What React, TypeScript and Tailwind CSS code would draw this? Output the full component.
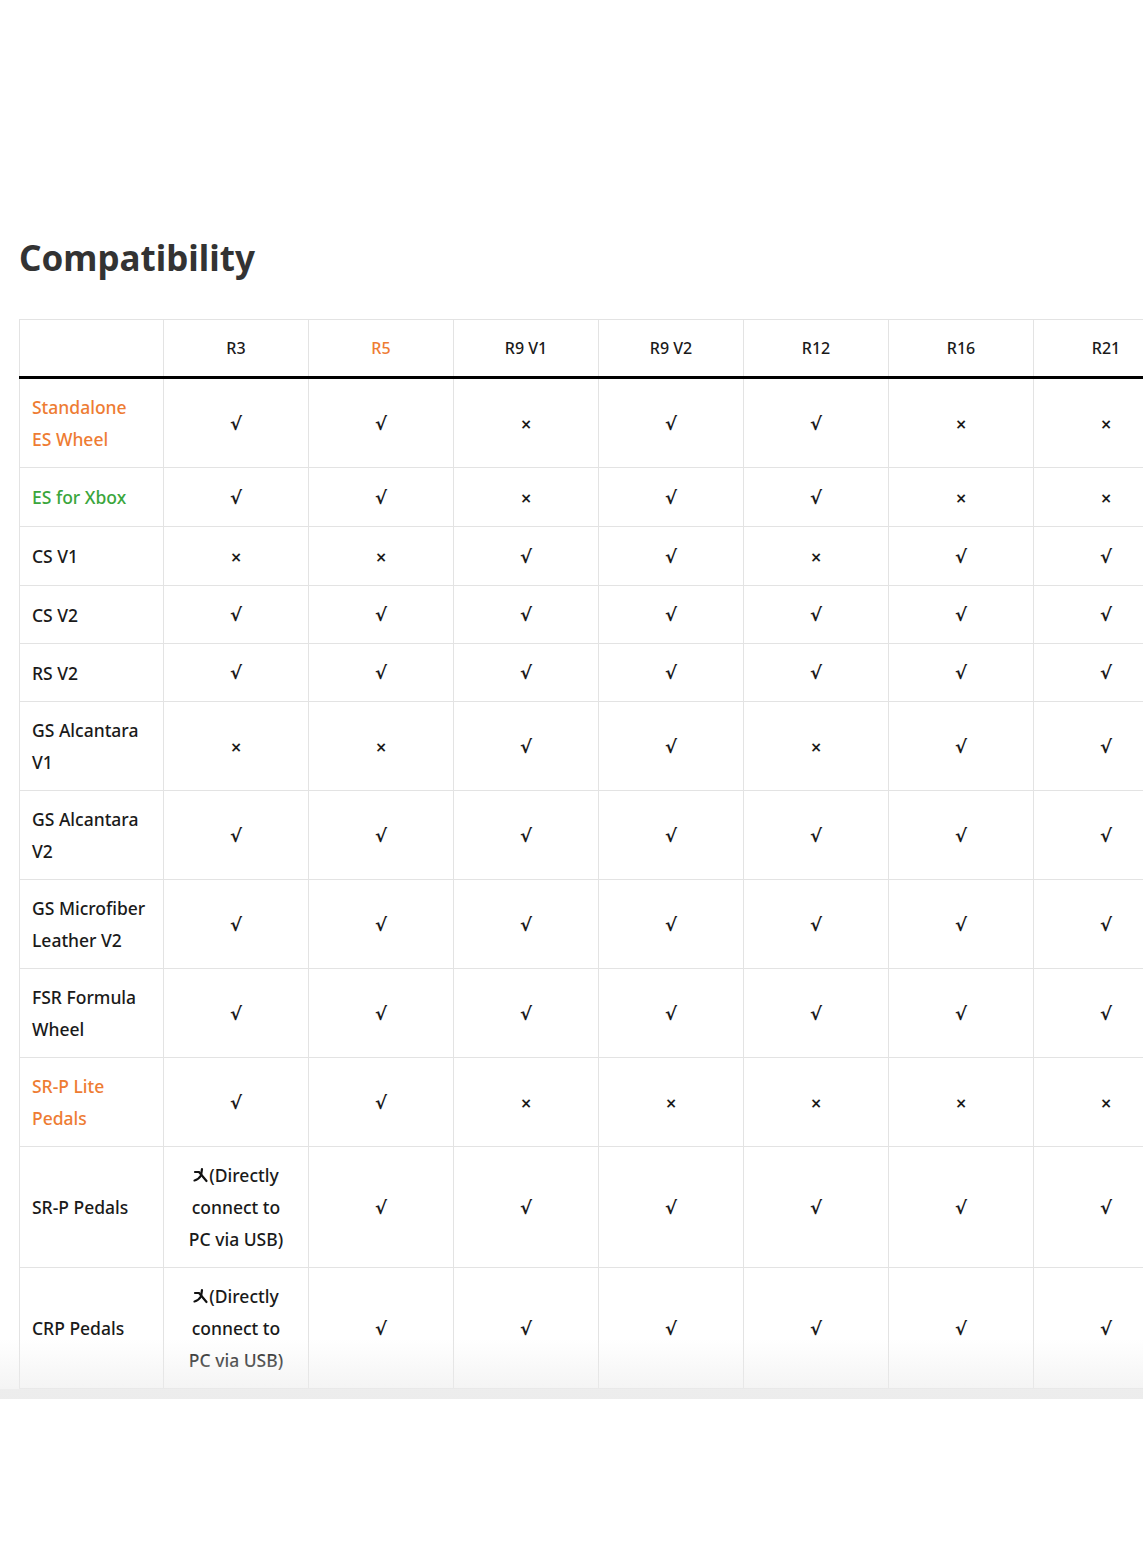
import React from 'react';

type Row = {
  name: string;
  color?: 'orange' | 'green';
  vals: string[];
};

const cols = ['R3', 'R5', 'R9 V1', 'R9 V2', 'R12', 'R16', 'R21'];

const Y = '√';
const N = '×';
const USB = 'usb';

const rows: Row[] = [
  { name: 'Standalone ES Wheel', color: 'orange', vals: [Y, Y, N, Y, Y, N, N] },
  { name: 'ES for Xbox', color: 'green', vals: [Y, Y, N, Y, Y, N, N] },
  { name: 'CS V1', vals: [N, N, Y, Y, N, Y, Y] },
  { name: 'CS V2', vals: [Y, Y, Y, Y, Y, Y, Y] },
  { name: 'RS V2', vals: [Y, Y, Y, Y, Y, Y, Y] },
  { name: 'GS Alcantara V1', vals: [N, N, Y, Y, N, Y, Y] },
  { name: 'GS Alcantara V2', vals: [Y, Y, Y, Y, Y, Y, Y] },
  { name: 'GS Microfiber Leather V2', vals: [Y, Y, Y, Y, Y, Y, Y] },
  { name: 'FSR Formula Wheel', vals: [Y, Y, Y, Y, Y, Y, Y] },
  { name: 'SR-P Lite Pedals', color: 'orange', vals: [Y, Y, N, N, N, N, N] },
  { name: 'SR-P Pedals', vals: [USB, Y, Y, Y, Y, Y, Y] },
  { name: 'CRP Pedals', vals: [USB, Y, Y, Y, Y, Y, Y] },
];

const nameColor = {
  orange: 'text-[#ee7c33]',
  green: 'text-[#3aa63c]',
};

// the struck-through tick used on the source page
const CrossedCheck = () => (
  <svg width="16" height="16" viewBox="0 0 16 16" className="inline-block align-[-1px]" fill="none" stroke="#111" strokeWidth="2.2" strokeLinecap="round" strokeLinejoin="round">
    <path d="M2 5 H6 L13.5 14" />
    <path d="M1.5 13.5 Q5.5 12.5 8 8.5 L9 2" />
  </svg>
);

const Cell = ({ v }: { v: string }) => {
  if (v === USB) {
    return (
      <span>
        <CrossedCheck />
        (Directly connect to PC via USB)
      </span>
    );
  }
  if (v === N) return <span className="font-bold text-[14px] font-['DejaVu_Sans']">×</span>;
  return <span className="font-bold text-[18px] font-['DejaVu_Sans']">√</span>;
};

export default function App() {
  return (
    <div
      className="bg-white w-[1143px] min-h-[1559px] text-[#1a1a1a]"
      style={{ fontFamily: '"Noto Sans", "Noto Sans CJK SC", sans-serif' }}
    >
      <div className="pt-[235px] pl-[19px]">
        <h2 className="text-[35px] font-bold leading-[46px] text-[#333]">Compatibility</h2>
      </div>

      <div className="relative mt-[38px] overflow-hidden">
        <div className="pl-[19px]">
          <table className="table-fixed border-collapse w-[1159px] text-[17.5px] font-medium leading-[32px]">
            <colgroup>
              <col className="w-[144px]" />
              {cols.map(c => (
                <col key={c} className="w-[145px]" />
              ))}
            </colgroup>
            <thead>
              <tr>
                <th className="border border-[#e3e3e3] border-b-black border-b-[3px] h-[58px]" />
                {cols.map(c => (
                  <th
                    key={c}
                    className={`border border-[#e3e3e3] border-b-black border-b-[3px] font-medium text-[16px] text-center ${
                      c === 'R5' ? 'text-[#ee7c33]' : ''
                    }`}
                  >
                    {c}
                  </th>
                ))}
              </tr>
            </thead>
            <tbody>
              {rows.map(r => (
                <tr key={r.name}>
                  <td
                    className={`border border-[#e3e3e3] pl-3 pr-4 py-3 text-left align-middle ${
                      r.color ? nameColor[r.color] : ''
                    }`}
                  >
                    {r.name}
                  </td>
                  {r.vals.map((v, i) => (
                    <td key={i} className="border border-[#e3e3e3] px-4 py-3 text-center align-middle">
                      <Cell v={v} />
                    </td>
                  ))}
                </tr>
              ))}
            </tbody>
          </table>
        </div>
        <div className="h-[10px] bg-[#eeeeee]" />
        <div className="pointer-events-none absolute left-0 right-0 bottom-0 h-[60px] bg-gradient-to-b from-white/0 to-[#ececec]/70" />
      </div>
    </div>
  );
}
